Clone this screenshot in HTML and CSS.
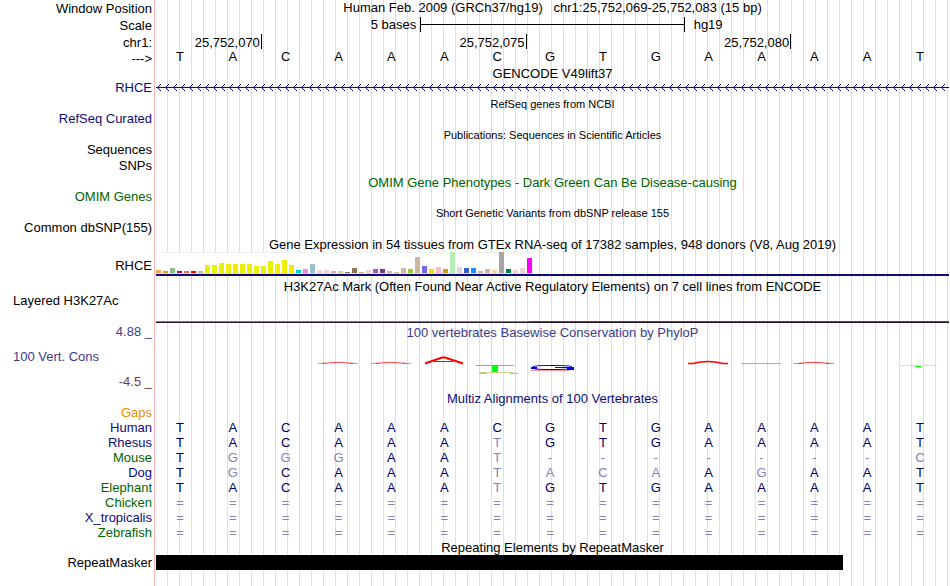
FILE: index.html
```
<!DOCTYPE html>
<html lang="en">
<head>
    <meta charset="UTF-8">
    <meta name="viewport" content="width=device-width, initial-scale=1.0">
    <title>Genome Browser - RHCE</title>
    <link rel="stylesheet" href="styles.css">
</head>
<body>
    <main class="browser">
        <!-- Position and ruler -->
        <div class="row position">
            <div class="label">Window Position</div>
            <h1 class="title">Human Feb. 2009 (GRCh37/hg19) &nbsp; chr1:25,752,069-25,752,083 (15 bp)</h1>
        </div>
        <div class="row scale">
            <div class="label">Scale</div>
            <div class="data scale-bar">
                <span class="scale-size">5 bases</span>
                <span class="scale-line"></span>
                <span class="scale-db">hg19</span>
            </div>
        </div>
        <div class="row ruler">
            <div class="label">chr1:</div>
            <div class="data ticks">
                <span>25,752,070</span>
                <span>25,752,075</span>
                <span>25,752,080</span>
            </div>
        </div>
        <div class="row strand">
            <div class="label">---&gt;</div>
            <div class="data bases" data-bases="TACAAACGTGAAAAT"></div>
        </div>

        <!-- Genes and variants -->
        <div class="row head"><h2 class="title">GENCODE V49lift37</h2></div>
        <div class="row track">
            <div class="label navy">RHCE</div>
            <svg class="data gene" height="14">
                <defs>
                    <pattern id="arrows" width="8" height="14" patternUnits="userSpaceOnUse">
                        <path d="M4 4h1v1h-1zM3 5h1v1h-1zM2 6h1v1h-1zM1 7h1v1h-1zM2 8h1v1h-1zM3 9h1v1h-1zM4 10h1v1h-1z" fill="#0c0c78" shape-rendering="crispEdges" />
                    </pattern>
                </defs>
                <rect width="100%" height="14" fill="url(#arrows)" />
                <rect y="7" width="100%" height="1" fill="#0c0c78" />
            </svg>
        </div>
        <div class="row head"><h2 class="title small">RefSeq genes from NCBI</h2></div>
        <div class="row track"><div class="label navy">RefSeq Curated</div></div>
        <div class="row head"><h2 class="title small">Publications: Sequences in Scientific Articles</h2></div>
        <div class="row track first"><div class="label">Sequences</div></div>
        <div class="row track"><div class="label">SNPs</div></div>
        <div class="row head"><h2 class="title green">OMIM Gene Phenotypes - Dark Green Can Be Disease-causing</h2></div>
        <div class="row track"><div class="label green">OMIM Genes</div></div>
        <div class="row head"><h2 class="title small">Short Genetic Variants from dbSNP release 155</h2></div>
        <div class="row track"><div class="label">Common dbSNP(155)</div></div>

        <!-- Expression -->
        <div class="row head"><h2 class="title">Gene Expression in 54 tissues from GTEx RNA-seq of 17382 samples, 948 donors (V8, Aug 2019)</h2></div>
        <div class="row gtex">
            <div class="label">RHCE</div>
            <div class="data gtex-data">
                <div class="bars" id="gtexBars"></div>
            </div>
        </div>

        <!-- Regulation -->
        <div class="row head"><h2 class="title">H3K27Ac Mark (Often Found Near Active Regulatory Elements) on 7 cell lines from ENCODE</h2></div>
        <div class="row h3k">
            <div class="label left">Layered H3K27Ac</div>
            <div class="data signal"></div>
        </div>

        <!-- Conservation -->
        <div class="row head">
            <div class="label violet">4.88 _</div>
            <h2 class="title violet">100 vertebrates Basewise Conservation by PhyloP</h2>
        </div>
        <div class="row cons">
            <div class="label cons-labels">
                <span class="left violet">100 Vert. Cons</span>
                <span class="brown">-4.5 _</span>
            </div>
            <svg class="data logo" viewBox="0 0 793 52" preserveAspectRatio="none">
                <g fill="none" stroke="#ff0000">
                    <path d="M162 24.5H170M194 24.5H202M215 24.5H223M247 24.5H255" opacity=".5" />
                    <path d="M167 24.3Q182 22.3 197 24.3M220 24.3Q235 22.3 250 24.3" opacity=".75" />
                    <path d="M269 24.5L286 18.5H289L307 24.5" stroke-width="2" />
                    <path d="M278 22.5H297" />
                    <path d="M532 24.5H537Q552 20.5 567 24.5H572" stroke-width="1.4" />
                    <path d="M585 24.5H625" opacity=".45" />
                    <path d="M638 24.5H646M670 24.5H678" opacity=".6" />
                    <path d="M643 24.3Q658 22.3 673 24.3" opacity=".8" />
                    <path d="M375 31.5H414" opacity=".4" />
                </g>
                <path d="M320 26h38v1h-38z" fill="#30ee30" />
                <path d="M336 26h6v7h-6zM759 26h6v2h-6z" fill="#00ff00" />
                <path d="M323 33h34v1h-34z" fill="#d0d084" />
                <path d="M323 34h8v1h-8zM354 34h8v1h-8z" fill="#c0c058" />
                <path d="M416 27.5Q412 26.5 400 26.5H390Q376 26.5 376 28.7Q377 30.5 390 30.5H402Q414 30.5 417 28.5H399" fill="none" stroke="#0000ff" />
                <path d="M375 28h6v2h-6zM411 28h7v3h-7z" fill="#0000ff" />
                <path d="M743 26h38v1h-38z" fill="#b8f5c4" />
            </svg>
        </div>
        <div class="row head"><h2 class="title navy">Multiz Alignments of 100 Vertebrates</h2></div>
        <div class="row species"><div class="label orange">Gaps</div></div>
        <div class="row species"><div class="label navy">Human</div><div class="data bases aligned" data-bases="TACAAACGTGAAAAT"></div></div>
        <div class="row species"><div class="label navy">Rhesus</div><div class="data bases aligned" data-bases="TACAAATGTGAAAAT"></div></div>
        <div class="row species"><div class="label green">Mouse</div><div class="data bases aligned" data-bases="TGGGAAT-------C"></div></div>
        <div class="row species"><div class="label navy">Dog</div><div class="data bases aligned" data-bases="TGCAAATACAAGAAT"></div></div>
        <div class="row species"><div class="label green">Elephant</div><div class="data bases aligned" data-bases="TACAAATGTGAAAAT"></div></div>
        <div class="row species"><div class="label green">Chicken</div><div class="data bases aligned" data-bases="==============="></div></div>
        <div class="row species"><div class="label navy">X_tropicalis</div><div class="data bases aligned" data-bases="==============="></div></div>
        <div class="row species"><div class="label green">Zebrafish</div><div class="data bases aligned" data-bases="==============="></div></div>

        <!-- Repeats -->
        <div class="row head"><h2 class="title">Repeating Elements by RepeatMasker</h2></div>
        <div class="row repeats">
            <div class="label">RepeatMasker</div>
            <div class="data bases"><span class="repeat"></span></div>
        </div>
    </main>
    <script src="script.js"></script>
</body>
</html>
```
FILE: styles.css
```
body {
    margin: 0;
    background: #fff;
    color: #000;
    font-family: "Liberation Sans", Arial, Helvetica, sans-serif;
    font-size: 13px;
    line-height: 16px;
}
.browser {
    min-height: 100vh;
    box-sizing: border-box;
    padding-right: 1px;
    background:
        linear-gradient(#ffb4b4, #ffb4b4) 154px 0 / 1px 100% no-repeat,
        repeating-linear-gradient(to right, transparent 0 11px, #dcdcf8 11px 12px) right / calc(100% - 156px) 100% no-repeat;
}
.row {
    display: grid;
    grid-template-columns: 156px 1fr;
}
.label {
    grid-column: 1;
    padding-right: 4px;
    text-align: right;
    white-space: nowrap;
}
.title, .data {
    grid-column: 2;
    min-width: 0;
}
.title {
    margin: 0;
    font-size: 13px;
    font-weight: normal;
    text-align: center;
    white-space: nowrap;
}
.title.small {
    font-size: 11px;
    line-height: 14px;
}
.left {
    padding-left: 13px;
    text-align: left;
}
.navy {
    color: #0c0c78;
}
.green {
    color: #006400;
}
.violet {
    color: #3c3c8c;
}
.brown {
    color: #783c3c;
}
.orange {
    color: #e68c00;
}

/* Ruler */
.position {
    height: 16px;
}
.position .label {
    line-height: 18px;
}
.scale {
    height: 18px;
    line-height: 18px;
}
.scale .label {
    line-height: 20px;
}
.scale-bar {
    display: grid;
    grid-template-columns: repeat(3, 1fr);
}
.scale-size {
    padding-right: 4px;
    text-align: right;
}
.scale-line {
    height: 15px;
    margin-top: 1px;
    border: solid #000;
    border-width: 0 1px;
    background: linear-gradient(#000, #000) 0 7px / 100% 1px no-repeat;
}
.scale-db {
    padding-left: 9px;
}
.ruler {
    height: 17px;
    line-height: 17px;
}
.ticks {
    display: grid;
    grid-template-columns: 2fr 5fr 5fr 3fr;
    margin-right: -1px;
}
.ticks span {
    height: 15px;
    padding-right: 1px;
    border-right: 1px solid #000;
    text-align: right;
}
.strand {
    height: 15px;
}
.bases {
    display: grid;
    grid-template-columns: repeat(15, 1fr);
}
.base {
    padding-right: 5px;
    text-align: center;
}
.strand .label {
    line-height: 15px;
}
.strand .base {
    line-height: 12px;
}
.aligned {
    color: #000064;
}
.aligned .diff {
    color: #8282b4;
}

/* Tracks */
.head {
    height: 14px;
}
.head .label {
    line-height: 14px;
}
.track {
    height: 17px;
}
.track.first {
    height: 16px;
}
.gene {
    width: 100%;
}
.gtex {
    height: 28px;
}
.gtex .label {
    line-height: 30px;
}
.gtex-data {
    height: 25px;
    padding-top: 1px;
    box-sizing: border-box;
    border-bottom: 2px solid #0c0c78;
}
.bars {
    display: flex;
    align-items: flex-end;
    gap: 2px;
    width: max-content;
    height: 21px;
    padding-right: 1px;
    border-bottom: 1px solid #dcdcdc;
    background: linear-gradient(#f0f0f0 1px, #fff 1px);
}
.bar {
    width: 5px;
}
.h3k {
    height: 32px;
}
.signal {
    height: 2px;
    margin-top: 28px;
    background:
        linear-gradient(#28142d, #28142d) 0 1px / 100% 1px no-repeat,
        linear-gradient(to right, #c85a6e 47%, #50465a 47%);
}
.cons {
    height: 52px;
}
.cons-labels {
    display: flex;
    flex-direction: column;
    gap: 9px;
    padding-top: 10px;
}
.logo {
    width: 100%;
    height: 52px;
}
.species {
    height: 15px;
    line-height: 15px;
}
.repeats {
    height: 15px;
    padding-top: 1px;
    line-height: 15px;
}
.repeat {
    grid-column: span 13;
    height: 15px;
    background: #000;
}
```
FILE: script.js
```
// One cell per base, dimmed where it differs from human
const human = 'TACAAACGTGAAAAT';

document.querySelectorAll('[data-bases]').forEach(row => {
    [...row.dataset.bases].forEach((base, i) => {
        const cell = document.createElement('span');
        cell.className = base === human[i] ? 'base' : 'base diff';
        cell.textContent = base;
        row.appendChild(cell);
    });
});

// GTEx tissues: [color, height]
const tissues = [
    ['#ffa54f', 3], ['#ee9a00', 2], ['#8fbc8f', 5], ['#8b1c62', 2], ['#ee6a50', 2], ['#ff0000', 2],
    ['#cdb79e', 2], ['#eeee00', 8], ['#eeee00', 8], ['#eeee00', 10], ['#eeee00', 9], ['#eeee00', 9],
    ['#eeee00', 9], ['#eeee00', 9], ['#eeee00', 7], ['#eeee00', 7], ['#eeee00', 12], ['#eeee00', 9],
    ['#eeee00', 13], ['#eeee00', 8], ['#00cdcd', 3], ['#ee82ee', 4], ['#9ac0cd', 9], ['#eed5d2', 3],
    ['#eed5d2', 3], ['#cdb79e', 2], ['#eec591', 2], ['#8b7355', 1], ['#8b7355', 5], ['#cdaa7d', 1],
    ['#eed5d2', 3], ['#b452cd', 4], ['#7a378b', 4], ['#cdb79e', 2], ['#cdb79e', 1], ['#cdb79e', 5],
    ['#9acd32', 4], ['#cdb79e', 16], ['#7a67ee', 7], ['#ffd700', 4], ['#ffb6c1', 6], ['#cd9b1d', 4],
    ['#b4eeb4', 21], ['#d9d9d9', 6], ['#3a5fcd', 5], ['#1e90ff', 5], ['#cdb79e', 2], ['#cdb79e', 4],
    ['#ffd39b', 3], ['#a6a6a6', 21], ['#008b45', 4], ['#eed5d2', 3], ['#eed5d2', 5], ['#ff00ff', 15]
];

const bars = document.getElementById('gtexBars');
tissues.forEach(([color, height]) => {
    const bar = document.createElement('span');
    bar.className = 'bar';
    bar.style.height = height + 'px';
    bar.style.background = color;
    bars.appendChild(bar);
});
```
